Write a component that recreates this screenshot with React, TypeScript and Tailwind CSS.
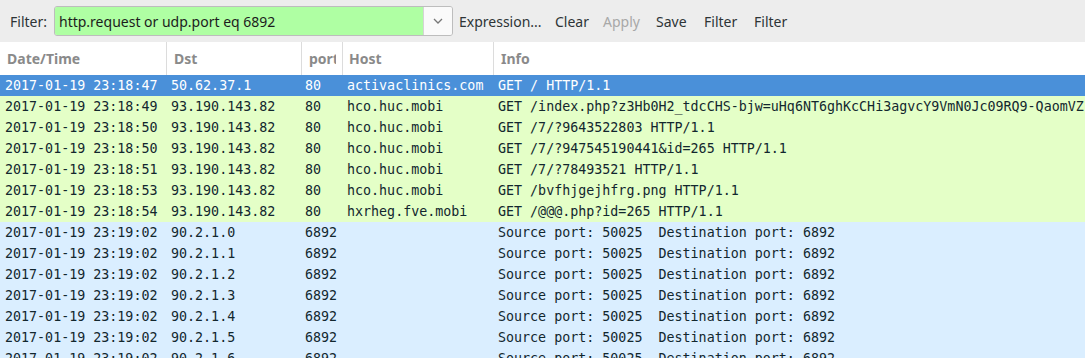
import React from "react";

type Row = { t: string; dst: string; port: string; host: string; info: string; kind: "sel" | "http" | "udp" };

const rows: Row[] = [
  { t: "2017-01-19 23:18:47", dst: "50.62.37.1", port: "80", host: "activaclinics.com", info: "GET / HTTP/1.1", kind: "sel" },
  { t: "2017-01-19 23:18:49", dst: "93.190.143.82", port: "80", host: "hco.huc.mobi", info: "GET /index.php?z3Hb0H2_tdcCHS-bjw=uHq6NT6ghKcCHi3agvcY9VmN0Jc09RQ9-QaomVZ1b HTTP/1.1", kind: "http" },
  { t: "2017-01-19 23:18:50", dst: "93.190.143.82", port: "80", host: "hco.huc.mobi", info: "GET /7/?9643522803 HTTP/1.1", kind: "http" },
  { t: "2017-01-19 23:18:50", dst: "93.190.143.82", port: "80", host: "hco.huc.mobi", info: "GET /7/?947545190441&id=265 HTTP/1.1", kind: "http" },
  { t: "2017-01-19 23:18:51", dst: "93.190.143.82", port: "80", host: "hco.huc.mobi", info: "GET /7/?78493521 HTTP/1.1", kind: "http" },
  { t: "2017-01-19 23:18:53", dst: "93.190.143.82", port: "80", host: "hco.huc.mobi", info: "GET /bvfhjgejhfrg.png HTTP/1.1", kind: "http" },
  { t: "2017-01-19 23:18:54", dst: "93.190.143.82", port: "80", host: "hxrheg.fve.mobi", info: "GET /@@@.php?id=265 HTTP/1.1", kind: "http" },
  ...[0, 1, 2, 3, 4, 5, 6].map((i) => ({
    t: "2017-01-19 23:19:02",
    dst: `90.2.1.${i}`,
    port: "6892",
    host: "",
    info: "Source port: 50025  Destination port: 6892",
    kind: "udp" as const,
  })),
];

const rowCls = {
  sel: "bg-[#4a90d9] text-white",
  http: "bg-[#e4ffc7] text-[#12272e]",
  udp: "bg-[#daeeff] text-[#12272e]",
};

export default function App() {
  return (
    <div className="w-[1085px] h-[358px] overflow-hidden bg-white" style={{ fontFamily: '"Noto Sans", "Open Sans", sans-serif' }}>
      {/* toolbar */}
      <div className="h-[42px] bg-[#ededed] flex items-center text-[14px] text-[#2e3436]">
        <span className="ml-[10px] w-[44px]">Filter:</span>
        <div className="flex h-[30px] w-[399px] rounded-[3px] border border-[#bdbdbd] overflow-hidden">
          <div className="flex-1 bg-[#afffa3] pl-[4px] flex items-center text-[#1c1c1c]">http.request or udp.port eq 6892</div>
          <div className="w-[29px] bg-[#fafafa] border-l border-[#d4d4d4] flex items-center justify-center">
            <svg width="10" height="6" viewBox="0 0 10 6">
              <path d="M1 1 L5 5 L9 1" fill="none" stroke="#777" strokeWidth="1.3" />
            </svg>
          </div>
        </div>
        <span className="ml-[6px] w-[96px]">Expression...</span>
        <span className="w-[48px]">Clear</span>
        <span className="w-[53px] text-[#a8a8a8]">Apply</span>
        <span className="w-[48px]">Save</span>
        <span className="w-[50px]">Filter</span>
        <span className="w-[50px]">Filter</span>
      </div>
      {/* header */}
      <div className="h-[33px] flex text-[14px] font-bold text-[#8a8a8a] bg-white">
        <div className="w-[166px] pl-[7px] flex items-center">Date/Time</div>
        <div className="w-[135px] pl-[7px] border-l border-[#dcdcdc] flex items-center">Dst</div>
        <div className="w-[41px] pl-[7px] border-l border-[#dcdcdc] flex items-center overflow-hidden whitespace-nowrap">
          <span className="block w-[27px] shrink-0 overflow-hidden">port</span>
        </div>
        <div className="w-[151px] pl-[6px] border-l border-[#dcdcdc] flex items-center">Host</div>
        <div className="flex-1 pl-[7px] border-l border-[#dcdcdc] flex items-center">Info</div>
      </div>
      {/* rows */}
      <div className="text-[13.33px]">
        {rows.map((r, i) => (
          <div
            key={i}
            className={`flex h-[21px] leading-[21px] whitespace-pre overflow-hidden ${rowCls[r.kind]}`}
            style={{ fontFamily: '"DejaVu Sans Mono", monospace' }}
          >
            <div className="w-[166px] pl-[5px] shrink-0">{r.t}</div>
            <div className="w-[135px] pl-[5px] shrink-0">{r.dst}</div>
            <div className="w-[41px] pl-[4px] shrink-0">{r.port}</div>
            <div className="w-[151px] pl-[5px] shrink-0">{r.host}</div>
            <div className="pl-[5px] shrink-0">{r.info}</div>
          </div>
        ))}
      </div>
    </div>
  );
}
